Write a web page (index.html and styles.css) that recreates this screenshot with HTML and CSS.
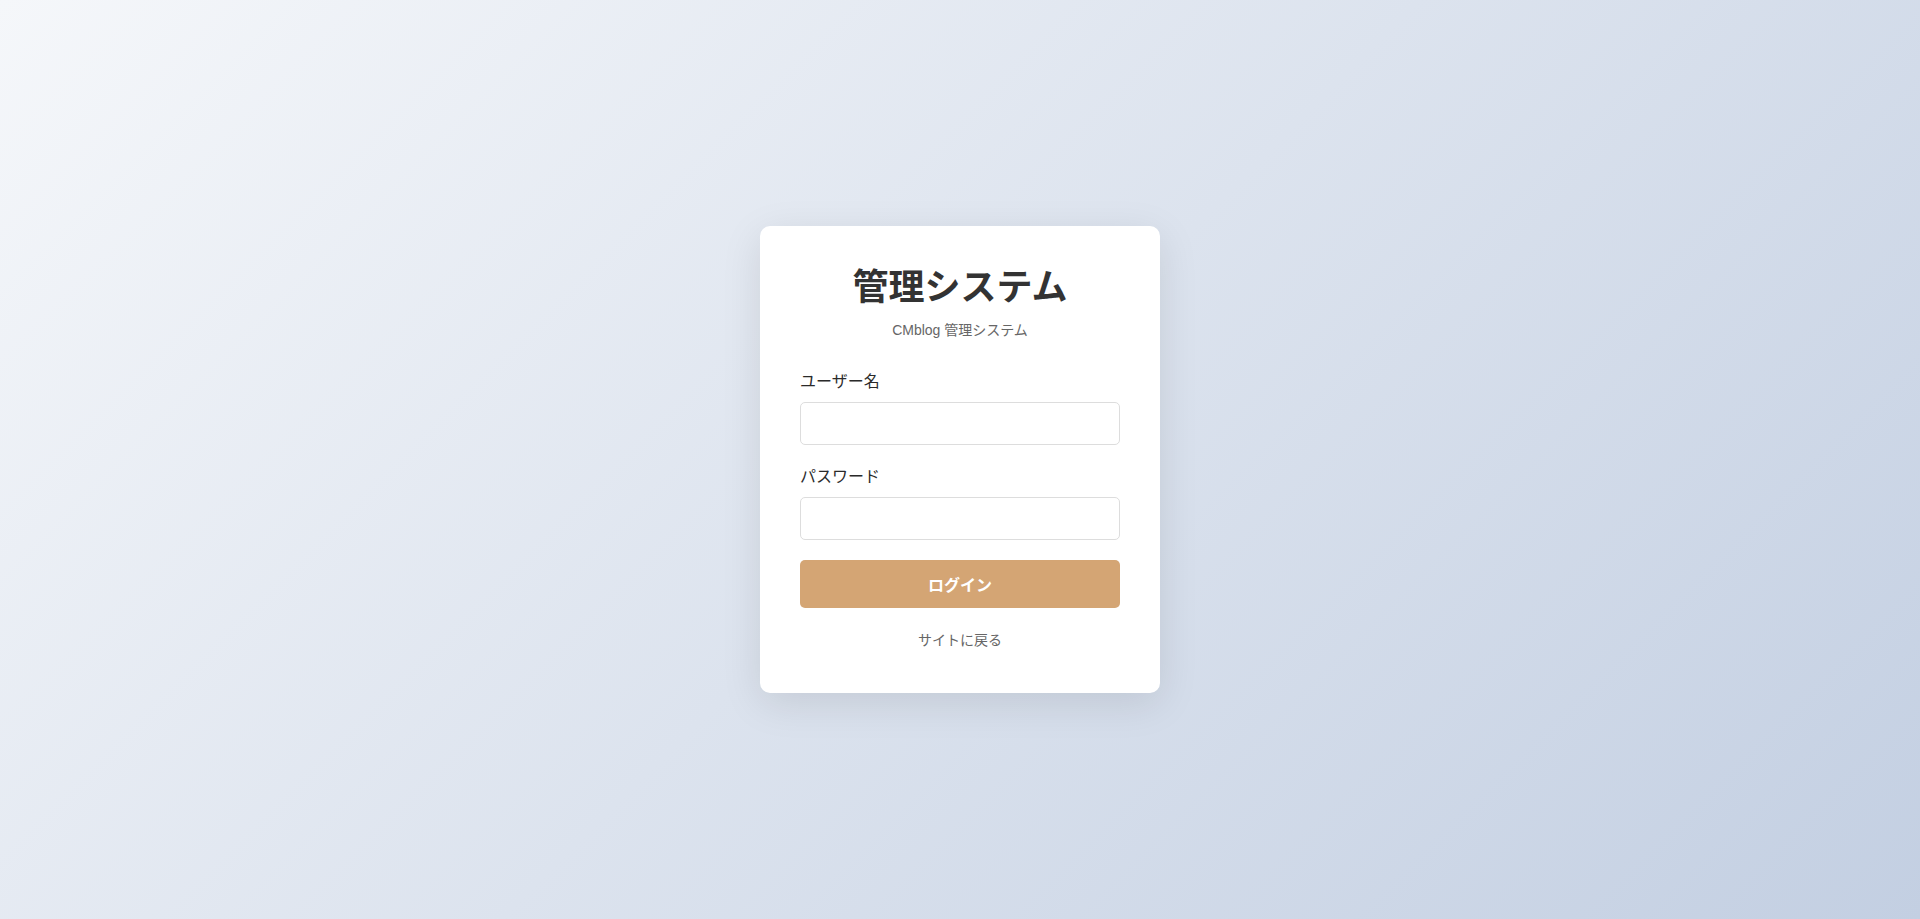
FILE: index.html
```html
<!DOCTYPE html>
<html lang="ja">
<head>
<meta charset="utf-8">
<title>ログイン - CMblog 管理システム</title>
<link rel="stylesheet" href="styles.css">
</head>
<body>
<div class="login-wrap">
    <div class="login-box">
        <h1 class="login-title">管理システム</h1>
        <p class="login-sub">CMblog 管理システム</p>
        <form class="login-form" onsubmit="return false;">
            <div class="form-group">
                <label for="username">ユーザー名</label>
                <input type="text" id="username" name="username">
            </div>
            <div class="form-group">
                <label for="password">パスワード</label>
                <input type="password" id="password" name="password">
            </div>
            <button type="submit" class="btn-login">ログイン</button>
        </form>
        <div class="back-link">
            <a href="#">サイトに戻る</a>
        </div>
    </div>
</div>
</body>
</html>
```

FILE: styles.css
```css
* {
    box-sizing: border-box;
}
html, body {
    height: 100%;
}
body {
    margin: 0;
    font-family: "Liberation Sans", "Noto Sans CJK JP", sans-serif;
    color: #333;
    background: linear-gradient(135deg, #f5f7fa 0%, #c3cfe2 100%);
}
.login-wrap {
    min-height: 100%;
    display: flex;
    align-items: center;
    justify-content: center;
}
.login-box {
    width: 400px;
    background: #fff;
    border-radius: 10px;
    padding: 40px 40px 42px;
    box-shadow: 0 10px 40px rgba(0, 0, 0, 0.1);
}
.login-title {
    margin: 0 0 11px;
    font-size: 36px;
    line-height: 43px;
    font-weight: bold;
    text-align: center;
    color: #333;
}
.login-sub {
    margin: 0 0 29px;
    font-size: 14px;
    line-height: 21px;
    text-align: center;
    color: #666;
}
.form-group {
    margin-bottom: 20px;
}
.form-group label {
    display: block;
    margin-bottom: 8px;
    font-size: 16px;
    line-height: 24px;
    font-weight: normal;
    color: #2a2a2a;
}
.form-group input {
    display: block;
    width: 100%;
    height: 43px;
    padding: 0 12px;
    font-size: 15px;
    font-family: inherit;
    border: 1px solid #ddd;
    border-radius: 5px;
    outline: none;
    background: #fff;
}
.btn-login {
    display: block;
    width: 100%;
    height: 48px;
    border: none;
    border-radius: 5px;
    background: #d4a574;
    color: #fff;
    font-family: inherit;
    font-size: 16px;
    font-weight: bold;
    cursor: pointer;
}
.back-link {
    margin-top: 22px;
    text-align: center;
    font-size: 14px;
    line-height: 21px;
}
.back-link a {
    color: #666;
    text-decoration: none;
}
```
